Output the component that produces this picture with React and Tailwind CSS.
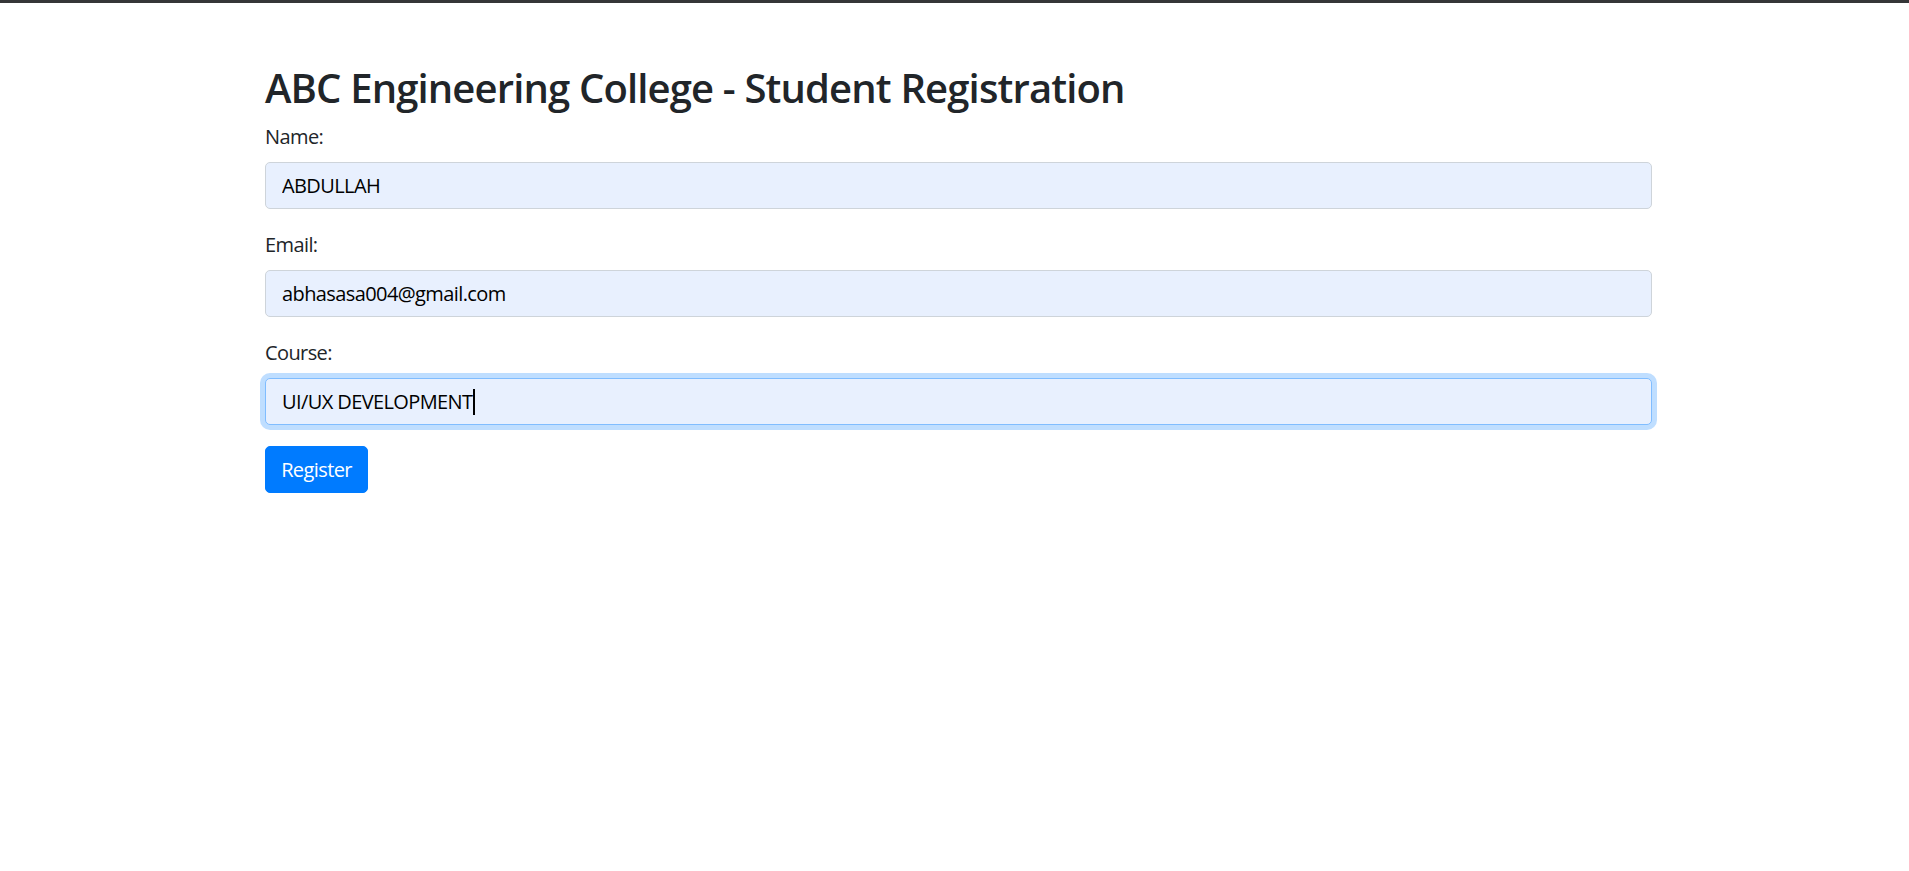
import React, { useState } from "react";

const fields = [
  { id: "name", label: "Name:", type: "text" },
  { id: "email", label: "Email:", type: "email" },
];

const StudentRegistration = () => {
  const [form, setForm] = useState({
    name: "ABDULLAH",
    email: "abhasasa004@gmail.com",
    course: "UI/UX DEVELOPMENT",
  });

  const handleChange = (e) => {
    setForm({ ...form, [e.target.name]: e.target.value });
  };

  return (
    <div className="min-h-screen bg-white border-t-[3px] border-[#353638] font-['Open_Sans',sans-serif] text-[#212529]">
      <div className="ml-[265px] w-[1387px] pt-[61px]">
        <h2 className="text-[40px] leading-[48px] font-semibold tracking-[-0.85px] mb-[10px]">
          ABC Engineering College - Student Registration
        </h2>

        <form onSubmit={(e) => e.preventDefault()}>
          {fields.map((f) => (
            <div key={f.id} className="mb-[21px]">
              <label htmlFor={f.id} className="block text-[20px] leading-[30px] tracking-[-0.6px] mb-[10px]">
                {f.label}
              </label>
              <input
                id={f.id}
                name={f.id}
                type={f.type}
                value={form[f.id]}
                onChange={handleChange}
                className="block w-full h-[47px] px-[16px] text-[20px] tracking-[-0.6px] text-black bg-[#e8f0fe] border border-[#ced4da] rounded-[5px] outline-none"
              />
            </div>
          ))}

          <div className="mb-[21px]">
            <label htmlFor="course" className="block text-[20px] leading-[30px] tracking-[-0.6px] mb-[10px]">
              Course:
            </label>
            <div
              id="course"
              className="flex items-center w-full h-[47px] px-[16px] text-[20px] tracking-[-0.6px] text-black bg-[#e8f0fe] border border-[#80bdff] rounded-[5px] shadow-[0_0_0_5px_rgba(0,123,255,0.25)]"
            >
              <span>{form.course}</span>
              <span className="inline-block w-[2px] h-[26px] bg-black" />
            </div>
          </div>

          <button
            type="submit"
            className="h-[47px] w-[103px] bg-[#007bff] text-white text-[20px] tracking-[-0.6px] rounded-[5px] border border-[#007bff]"
          >
            Register
          </button>
        </form>
      </div>
    </div>
  );
};

export default StudentRegistration;
